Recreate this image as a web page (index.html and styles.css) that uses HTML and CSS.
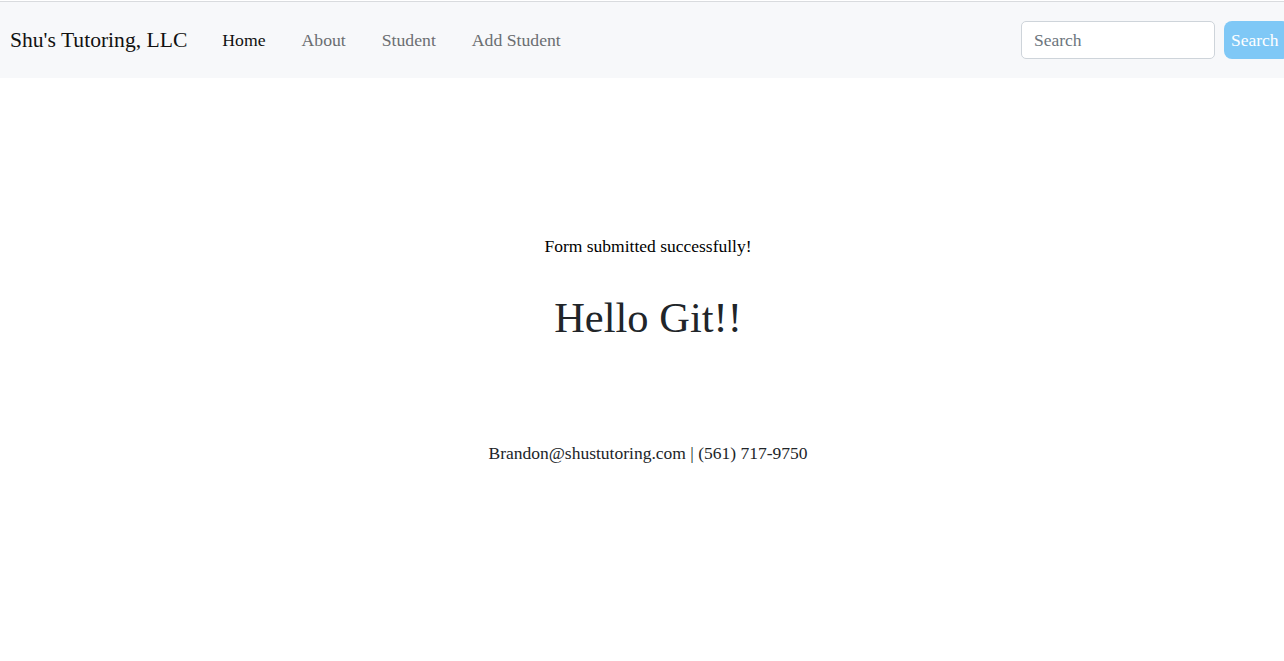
FILE: index.html
```html
<!DOCTYPE html>
<html>
<head>
<meta charset="utf-8">
<link rel="stylesheet" href="styles.css">
</head>
<body>
<nav class="navbar">
  <a class="brand">Shu's Tutoring, LLC</a>
  <ul class="nav-links">
    <li class="active">Home</li>
    <li>About</li>
    <li>Student</li>
    <li>Add Student</li>
  </ul>
  <form class="search">
    <input class="search-input" type="text" placeholder="Search">
    <button class="search-btn" type="button">Search</button>
  </form>
</nav>
<main class="content">
  <p class="flash">Form submitted successfully!</p>
  <h1 class="title">Hello Git!!</h1>
  <p class="contact">Brandon@shustutoring.com | (561) 717-9750</p>
</main>
</body>
</html>
```

FILE: styles.css
```css
* { box-sizing: border-box; }
html, body { margin: 0; padding: 0; }
body {
  font-family: "Liberation Serif", serif;
  font-size: 17.5px;
  color: #212529;
  background: #fff;
  padding-top: 1px;
}
.navbar {
  display: flex;
  align-items: center;
  height: 77px;
  background: #f7f8fa;
  border-top: 1px solid #d9dbde;
  padding-left: 10px;
}
.brand {
  font-size: 21.6px;
  color: #111;
  margin-right: 35px;
}
.nav-links {
  display: flex;
  list-style: none;
  margin: 0;
  padding: 0;
  gap: 36px;
  color: #6b6e71;
  flex: 1;
  font-size: 17.7px;
}
.nav-links li.active { color: #111; }
.search {
  display: flex;
  align-items: center;
  gap: 9px;
}
.search-input {
  width: 194px;
  height: 38px;
  border: 1px solid #ced4da;
  border-radius: 5px;
  padding: 0 12px;
  font-family: inherit;
  font-size: 17.5px;
  color: #212529;
  background: #fff;
}
.search-input::placeholder { color: #6c757d; }
.search-btn {
  height: 38px;
  width: 66px;
  margin-right: -6px;
  border: none;
  border-radius: 8px;
  background: #7fc8f6;
  color: #fff;
  font-family: inherit;
  font-size: 17.5px;
  padding: 0 7px;
  text-align: left;
}
.content {
  text-align: center;
  padding-top: 158px;
  padding-left: 12px;
}
.flash {
  margin: 0;
  color: #000;
  line-height: 20px;
}
.title {
  margin: 37px 0 0;
  font-weight: normal;
  font-size: 42.5px;
  line-height: 50px;
}
.contact {
  margin: 100px 0 0;
  line-height: 20px;
}
```
